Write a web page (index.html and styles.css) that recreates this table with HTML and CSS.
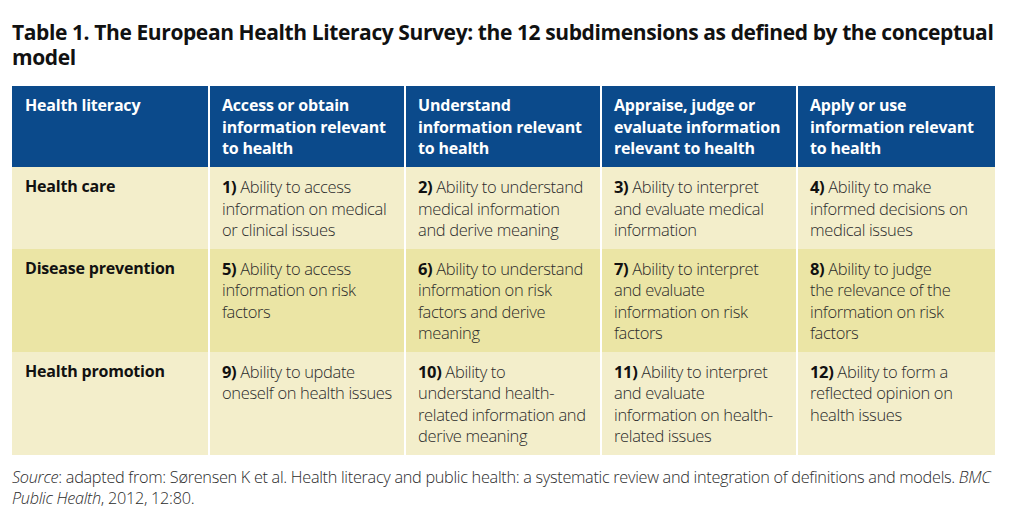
FILE: index.html
```html
<!DOCTYPE html>
<html lang="en">
<head>
<meta charset="utf-8">
<title>Table 1</title>
<link rel="stylesheet" href="styles.css">
</head>
<body>
<h1 class="title">Table 1. The European Health Literacy Survey: the 12 subdimensions as defined by the conceptual model</h1>
<div class="table">
  <div class="cell head">Health literacy</div>
  <div class="cell head">Access or obtain<br>information relevant<br>to health</div>
  <div class="cell head">Understand<br>information relevant<br>to health</div>
  <div class="cell head">Appraise, judge or<br>evaluate information<br>relevant to health</div>
  <div class="cell head">Apply or use<br>information relevant<br>to health</div>

  <div class="cell light rowhead">Health care</div>
  <div class="cell light"><b>1)</b> Ability to access<br>information on medical<br>or clinical issues</div>
  <div class="cell light"><b>2)</b> Ability to understand<br>medical information<br>and derive meaning</div>
  <div class="cell light"><b>3)</b> Ability to interpret<br>and evaluate medical<br>information</div>
  <div class="cell light"><b>4)</b> Ability to make<br>informed decisions on<br>medical issues</div>

  <div class="cell dark rowhead">Disease prevention</div>
  <div class="cell dark"><b>5)</b> Ability to access<br>information on risk<br>factors</div>
  <div class="cell dark"><b>6)</b> Ability to understand<br>information on risk<br>factors and derive<br>meaning</div>
  <div class="cell dark"><b>7)</b> Ability to interpret<br>and evaluate<br>information on risk<br>factors</div>
  <div class="cell dark"><b>8)</b> Ability to judge<br>the relevance of the<br>information on risk<br>factors</div>

  <div class="cell light rowhead">Health promotion</div>
  <div class="cell light"><b>9)</b> Ability to update<br>oneself on health issues</div>
  <div class="cell light"><b>10)</b> Ability to<br>understand health-<br>related information and<br>derive meaning</div>
  <div class="cell light"><b>11)</b> Ability to interpret<br>and evaluate<br>information on health-<br>related issues</div>
  <div class="cell light"><b>12)</b> Ability to form a<br>reflected opinion on<br>health issues</div>
</div>
<p class="source"><i>Source</i>: adapted from: Sørensen K et al. Health literacy and public health: a systematic review and integration of definitions and models. <i>BMC</i><br><i>Public Health</i>, 2012, 12:80.</p>
</body>
</html>
```

FILE: styles.css
```css
html, body {
  margin: 0;
  padding: 0;
  background: #ffffff;
}
body {
  padding: 0 12px 0 12px;
  font-family: "Open Sans", "Liberation Sans", sans-serif;
  color: #1a1a1a;
  width: 985px;
}
.title {
  margin: 0;
  padding-top: 20px;
  font-size: 21px;
  line-height: 25px;
  font-weight: 700;
  color: #111;
  letter-spacing: -0.4px;
  width: 983px;
}
.table {
  margin-top: 16px;
  display: grid;
  grid-template-columns: 196px 194px 194px 194px 197px;
  column-gap: 2px;
  width: 983px;
}
.cell {
  padding: 9px 4px 8px 12px;
  font-size: 16.5px;
  line-height: 21.5px;
  font-weight: 300;
  color: #2b2b2b;
  letter-spacing: -0.35px;
  white-space: nowrap;
}
.cell b {
  font-weight: 700;
  color: #111;
}
.head {
  background: #0b4a8b;
  color: #fff;
  font-size: 16px;
  font-weight: 700;
  letter-spacing: -0.2px;
  padding-top: 9px;
  height: 81px;
  box-sizing: border-box;
}
.rowhead {
  font-size: 16px;
  font-weight: 700;
  letter-spacing: -0.2px;
  color: #111;
  padding-left: 13px;
}
.head:first-child {
  padding-left: 13px;
}
.light {
  background: #f3eecb;
}
.dark {
  background: #ebe5a5;
}
.source {
  margin: 12px 0 0 0;
  font-size: 16.3px;
  line-height: 21px;
  font-weight: 300;
  color: #2b2b2b;
  letter-spacing: -0.3px;
  white-space: nowrap;
}
```
